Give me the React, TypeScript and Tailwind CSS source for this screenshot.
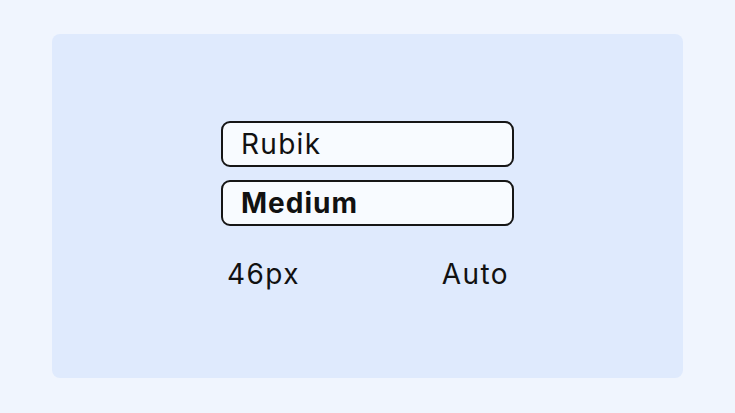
import React from 'react';

function FieldBox({ children, bold = false }: { children: React.ReactNode; bold?: boolean }) {
  return (
    <div
      className={`h-[46px] flex items-center rounded-[9px] border-2 border-[#161616] bg-[#f8fbff] pl-[18px] text-[28px] text-[#111] ${
        bold ? 'font-bold tracking-[1px]' : 'font-normal tracking-[1.3px]'
      }`}
    >
      {children}
    </div>
  );
}

export default function App() {
  return (
    <div className="w-[735px] h-[413px] bg-[#f0f5fe] pl-[52px] pr-[52px] pt-[34px] pb-[35px] font-['Inter',sans-serif]">
      <div className="h-full rounded-[8px] bg-[#dfeafd] flex items-center justify-center">
        <div className="w-[293px] flex flex-col">
          <div className="flex flex-col gap-[13px]">
            <FieldBox>Rubik</FieldBox>
            <FieldBox bold>Medium</FieldBox>
          </div>
          {/* size / line height */}
          <div className="mt-[31px] flex justify-between pl-[6px] pr-[5px] text-[28px] leading-[34px] tracking-[1.4px] text-[#111]">
            <span>46px</span>
            <span>Auto</span>
          </div>
        </div>
      </div>
    </div>
  );
}
